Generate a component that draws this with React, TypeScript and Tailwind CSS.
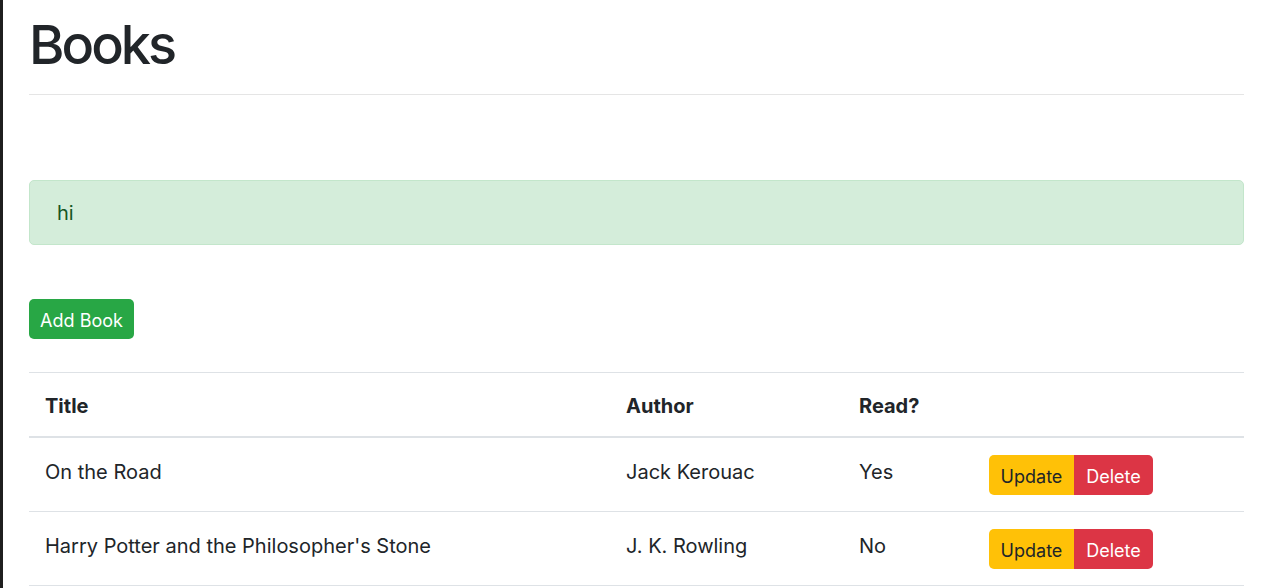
const books = [
  { title: "On the Road", author: "Jack Kerouac", read: true },
  { title: "Harry Potter and the Philosopher's Stone", author: "J. K. Rowling", read: false },
];

const App = () => {
  return (
    <div className="flex min-h-[588px] bg-white text-[#212529] font-['Inter',sans-serif]">
      <div className="w-[3px] shrink-0 bg-[#1f1f1f]" />
      <div className="flex-1 pl-[26px] pr-[28px]">
        <h1 className="mt-[12px] text-[54px] leading-[66px] font-medium tracking-[-0.055em]">Books</h1>
        <hr className="mt-[16px] border-0 border-t border-[#e5e5e5]" />

        <div className="mt-[85px] h-[65px] flex items-center pl-[27px] pr-[26px] pt-[1px] rounded-[5px] border border-[#c3e6cb] bg-[#d4edda] text-[#155724] text-[20px] leading-[28px]">
          hi
        </div>

        <button
          type="button"
          className="mt-[54px] h-[40px] w-[105px] justify-center pt-[3px] rounded-[5px] bg-[#28a745] text-white text-[18px] leading-[28px] flex items-center"
        >
          Add Book
        </button>

        <div className="mt-[33px] border-t border-[#dee2e6] text-[20px] leading-[28px]">
          <div className="flex h-[65px] pt-[19px] border-b-2 border-[#dee2e6] font-bold">
            <div className="w-[581px] pl-[16px]">Title</div>
            <div className="w-[233px] pl-[16px]">Author</div>
            <div className="w-[130px] pl-[16px]">Read?</div>
            <div className="flex-1" />
          </div>
          {books.map((book) => (
            <div key={book.title} className="flex h-[74px] border-b border-[#dee2e6]">
              <div className="w-[581px] pl-[16px] pt-[20px]">{book.title}</div>
              <div className="w-[233px] pl-[16px] pt-[20px]">{book.author}</div>
              <div className="w-[130px] pl-[16px] pt-[20px]">{book.read ? "Yes" : "No"}</div>
              <div className="flex-1 pl-[16px] pt-[17px]">
                <div className="flex">
                  <button
                    type="button"
                    className="h-[40px] w-[85px] justify-center pt-[3px] rounded-l-[5px] bg-[#ffc107] text-[#212529] text-[18px] leading-[28px] flex items-center"
                  >
                    Update
                  </button>
                  <button
                    type="button"
                    className="h-[40px] w-[79px] justify-center pt-[3px] rounded-r-[5px] bg-[#dc3545] text-white text-[18px] leading-[28px] flex items-center"
                  >
                    Delete
                  </button>
                </div>
              </div>
            </div>
          ))}
        </div>
      </div>
    </div>
  );
};

export default App;
